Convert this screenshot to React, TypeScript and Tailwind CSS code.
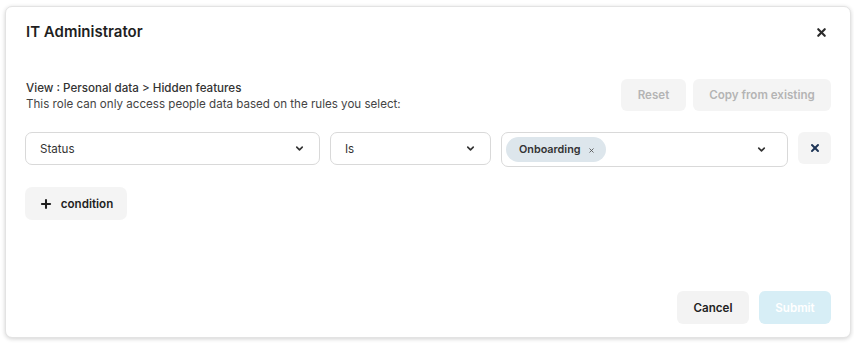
import { ChevronDown, Plus, X } from "lucide-react";

function Select({ label, className }: { label: string; className: string }) {
  return (
    <div
      className={`h-[33px] flex items-center justify-between pl-[14px] pr-[14px] border border-[#d9d9d9] rounded-[7px] bg-white ${className}`}
    >
      <span className="text-[11.6px] text-[#333] pt-[2px]">{label}</span>
      <ChevronDown className="w-[11px] h-[11px] text-[#333]" strokeWidth={3.5} />
    </div>
  );
}

export default function App() {
  return (
    <div className="w-[854px] h-[346px] bg-white pt-[6px] pl-[5px] font-['Inter',sans-serif]">
      <div className="w-[846px] h-[332px] rounded-[7px] border border-[#e3e3e3] bg-white shadow-[0_1px_4px_rgba(0,0,0,0.18)] flex flex-col px-[19px] pt-[15px] pb-[13px]">
        <div className="flex items-center justify-between h-[20px]">
          <h1 className="text-[15px] font-semibold text-[#1f1f1f] pl-[1px]">IT Administrator</h1>
          <X className="w-[13px] h-[13px] text-[#2a2a2a] mr-[3px]" strokeWidth={4} />
        </div>

        <div className="mt-[37px] flex items-start justify-between">
          <div className="text-[11.6px] leading-[16px] pl-[1px] pt-[1px]">
            <p className="font-medium text-[#333]">View : Personal data &gt; Hidden features</p>
            <p className="text-[#444]">This role can only access people data based on the rules you select:</p>
          </div>
          <div className="flex gap-[7px]">
            <button className="h-[32px] w-[65px] rounded-[6px] bg-[#f4f4f4] pt-[2px] text-[11.6px] font-semibold text-[#b4b4b4]">
              Reset
            </button>
            <button className="h-[32px] w-[138px] rounded-[6px] bg-[#f4f4f4] pt-[2px] text-[11.6px] font-semibold text-[#b4b4b4]">
              Copy from existing
            </button>
          </div>
        </div>

        <div className="mt-[20px] flex items-start gap-[10px]">
          <Select label="Status" className="w-[295px]" />
          <Select label="Is" className="w-[161px]" />
          <div className="w-[287px] h-[35px] flex items-center justify-between pl-[4px] pr-[20px] border border-[#d9d9d9] rounded-[7px] bg-white">
            <span className="h-[25px] flex items-center gap-[7px] pl-[13px] pr-[11px] pt-[1px] rounded-full bg-[#dde6ec] text-[10.8px] font-semibold text-[#333]">
              Onboarding
              <X className="w-[7px] h-[7px] text-[#555]" strokeWidth={3} />
            </span>
            <ChevronDown className="w-[11px] h-[11px] text-[#333]" strokeWidth={3.5} />
          </div>
          <button className="w-[33px] h-[32px] rounded-[6px] bg-[#f4f4f4] flex items-center justify-center">
            <X className="w-[12px] h-[12px] text-[#1e3556]" strokeWidth={4} />
          </button>
        </div>

        <button className="mt-[20px] self-start h-[33px] w-[102px] rounded-[7px] bg-[#f4f4f4] pt-[2px] flex items-center justify-center gap-[8px] text-[11.6px] font-semibold text-[#1f1f1f]">
          <Plus className="w-[14px] h-[14px] text-[#1f1f1f] -mt-[2px]" strokeWidth={3.5} />
          condition
        </button>

        <div className="flex-1" />

        <div className="flex justify-end gap-[10px]">
          <button className="h-[33px] w-[72px] rounded-[6px] bg-[#f3f3f3] pt-[2px] text-[11.6px] font-semibold text-[#222]">
            Cancel
          </button>
          <button className="h-[33px] w-[72px] rounded-[6px] bg-[#d7eef6] pt-[2px] text-[11.6px] font-semibold text-white">
            Submit
          </button>
        </div>
      </div>
    </div>
  );
}
